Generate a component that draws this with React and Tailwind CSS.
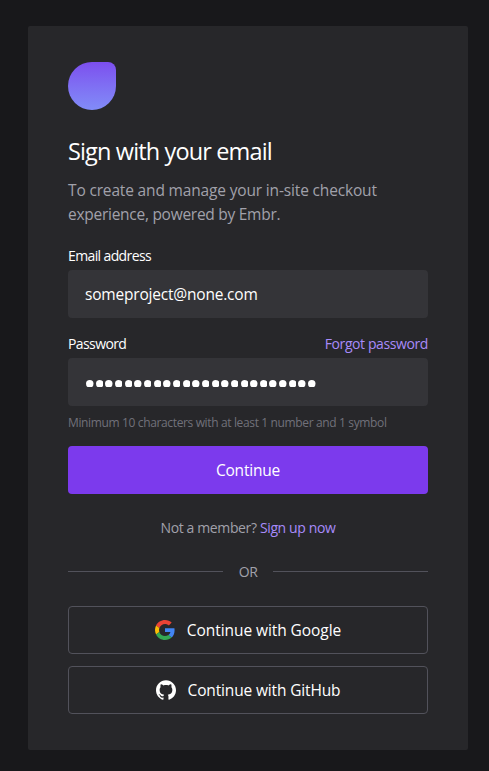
import React, { useState } from "react";
import { SiGithub } from "react-icons/si";

const PASSWORD_LENGTH = 24;

const GoogleIcon = () => (
  <svg viewBox="0 0 48 48" className="h-5 w-5 shrink-0">
    <path fill="#EA4335" d="M24 9.5c3.54 0 6.71 1.22 9.21 3.6l6.85-6.85C35.9 2.38 30.47 0 24 0 14.62 0 6.51 5.38 2.56 13.22l7.98 6.19C12.43 13.72 17.74 9.5 24 9.5z" />
    <path fill="#4285F4" d="M46.98 24.55c0-1.57-.15-3.09-.38-4.55H24v9.02h12.94c-.58 2.96-2.26 5.48-4.78 7.18l7.73 6c4.51-4.18 7.09-10.36 7.09-17.65z" />
    <path fill="#FBBC05" d="M10.53 28.59c-.48-1.45-.76-2.99-.76-4.59s.27-3.14.76-4.59l-7.98-6.19C.92 16.46 0 20.12 0 24c0 3.88.92 7.54 2.56 10.78l7.97-6.19z" />
    <path fill="#34A853" d="M24 48c6.48 0 11.93-2.13 15.89-5.81l-7.73-6c-2.15 1.45-4.92 2.3-8.16 2.3-6.26 0-11.57-4.22-13.47-9.91l-7.98 6.19C6.51 42.62 14.62 48 24 48z" />
  </svg>
);

const SocialButton = ({ icon, children }) => (
  <button
    type="button"
    className="flex h-12 w-full items-center justify-center gap-3 rounded border border-[#52525b] text-[15.5px] text-white"
  >
    {icon}
    {children}
  </button>
);

export default function App() {
  const [email, setEmail] = useState("someproject@none.com");

  return (
    <div className="min-h-screen bg-[#18181b] pt-[26px] pr-[21px] pb-[21px] pl-7 font-['Open_Sans','Noto_Sans',sans-serif] text-white">
      <div className="h-[724px] w-[440px] rounded-xs bg-[#27272a] px-10 pt-9">
        <div className="h-12 w-12 rounded-[24px] rounded-tr-[8px] bg-linear-to-b from-[#7c4eee] to-[#818cf8]" />

        <h1 className="mt-[25px] text-[23.5px] leading-8 whitespace-nowrap tracking-[-0.86px]">
          Sign with your email
        </h1>
        <p className="mt-[11px] text-[15.5px] leading-6 whitespace-nowrap text-[#a1a1aa]">
          <span className="tracking-[-0.16px]">To create and manage your in-site checkout</span>
          <br />
          <span className="tracking-[-0.27px]">experience, powered by Embr.</span>
        </p>

        <label className="mt-5 block text-sm leading-5 tracking-[-0.62px]">Email address</label>
        <input
          value={email}
          onChange={(e) => setEmail(e.target.value)}
          className="mt-1 block h-12 w-full rounded bg-[#343438] px-[17px] text-[15.5px] tracking-[-0.2px] outline-none"
        />

        <div className="mt-4 flex justify-between text-sm leading-5">
          <label className="tracking-[-0.6px]">Password</label>
          <a className="tracking-[-0.4px] text-[#a78bfa]">Forgot password</a>
        </div>
        <div className="mt-1 flex h-12 items-center gap-[2.17px] rounded bg-[#343438] pt-[3px] pl-[18px]">
          {Array.from({ length: PASSWORD_LENGTH }, (_, i) => (
            <svg key={i} viewBox="0 0 8 8" className="h-[7.5px] w-[7.5px] shrink-0">
              <circle cx="4" cy="4" r="4" fill="white" />
            </svg>
          ))}
        </div>
        <p className="mt-[9px] text-xs leading-4 whitespace-nowrap tracking-[-0.36px] text-[#71717a]">
          Minimum 10 characters with at least 1 number and 1 symbol
        </p>

        <button type="button" className="mt-[15px] h-12 w-full rounded bg-[#7c3aed] pt-px text-[15.5px] tracking-[-0.2px]">
          Continue
        </button>

        <p className="mt-6 text-center text-sm leading-5 tracking-[-0.37px] text-[#a1a1aa]">
          Not a member? <a className="text-[#a78bfa]">Sign up now</a>
        </p>

        <div className="mt-6 flex h-5 items-center gap-4 text-sm leading-5 tracking-[-0.4px] text-[#a1a1aa]">
          <div className="mb-px h-px flex-1 bg-[#52525b]" />
          OR
          <div className="mb-px h-px flex-1 bg-[#52525b]" />
        </div>

        <div className="mt-6 space-y-3">
          <SocialButton icon={<GoogleIcon />}>
            <span className="pt-0.5 tracking-[-0.07px]">Continue with Google</span>
          </SocialButton>
          <SocialButton icon={<SiGithub size={20} />}>
            <span className="pt-0.5 tracking-[-0.15px]">Continue with GitHub</span>
          </SocialButton>
        </div>
      </div>
    </div>
  );
}
